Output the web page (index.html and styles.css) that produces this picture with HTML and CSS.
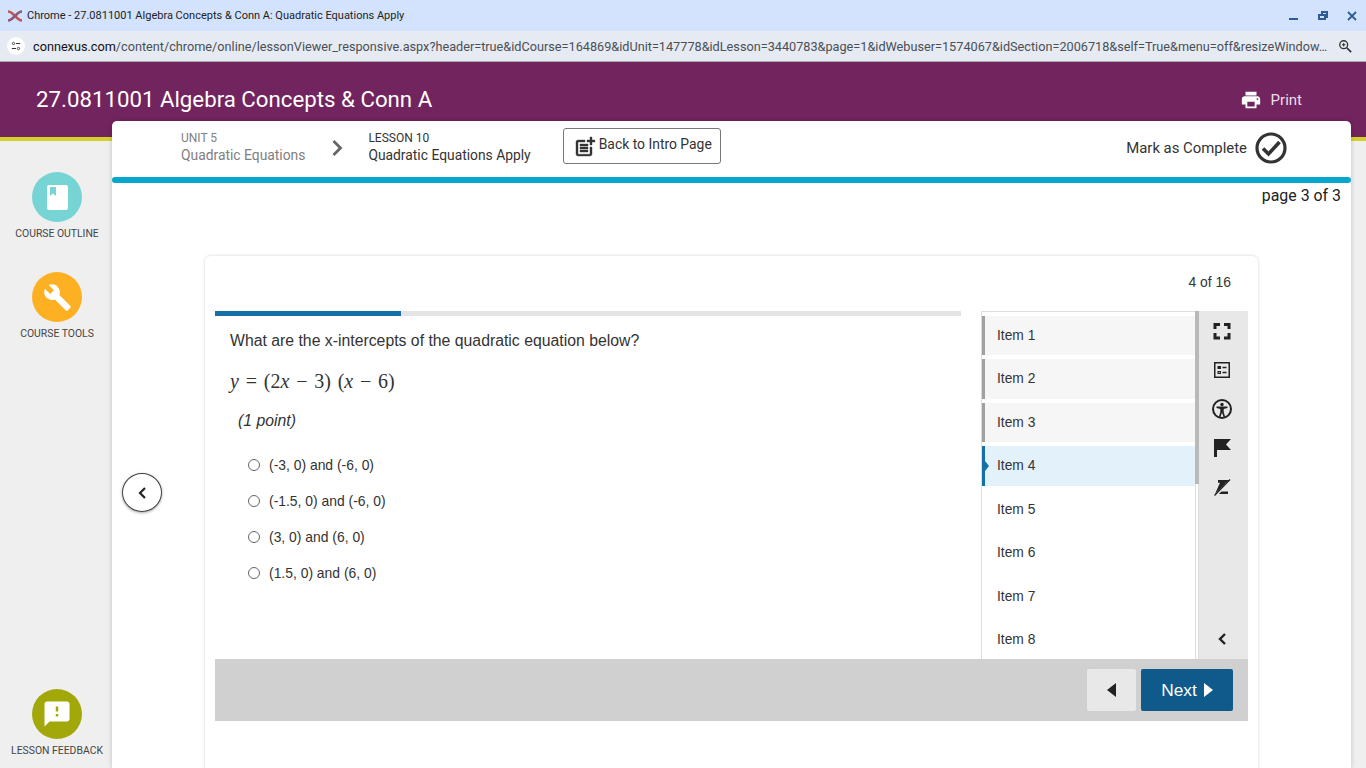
FILE: index.html

```html
<!DOCTYPE html>
<html lang="en">
<head>
    <meta charset="UTF-8">
    <title>Quadratic Equations Apply</title>
    <meta name="viewport" content="width=device-width, initial-scale=1.0">
    <link rel="stylesheet" href="styles.css">
</head>
<body>
    <div class="titlebar">
        <svg class="logo" viewBox="0 0 16 12"><path d="M1 1.500c3 0 5 2.500 7 4.500s4 4.500 7 4.500" fill="none" stroke="#c0555c" stroke-width="2.600"/><path d="M1 10.500c3 0 5-2.500 7-4.500s4-4.500 7-4.500" fill="none" stroke="#8d5a78" stroke-width="2.600"/></svg>
        <span class="title-text">Chrome - 27.0811001 Algebra Concepts &amp; Conn A: Quadratic Equations Apply</span>
        <div class="win-controls">
            <svg viewBox="0 0 12 12"><rect x="1" y="8" width="9" height="2" fill="#2f5c94"/></svg>
            <svg viewBox="0 0 12 12"><path d="M4 1h7v7H9v2H1V4h3zM3 6v2h4V6zM6 3v1h3v2h0V3z" fill="#2f5c94"/></svg>
            <svg viewBox="0 0 12 12"><path d="M2 2l8 8M10 2l-8 8" stroke="#2f5c94" stroke-width="1.800"/></svg>
        </div>
    </div>
    <div class="urlbar">
        <span class="site-icon">
            <svg viewBox="0 0 12 12"><circle cx="3" cy="3" r="1.400" fill="none" stroke="#333" stroke-width="1"/><path d="M6 3h5M1 9h5" stroke="#333" stroke-width="1.200"/><circle cx="9" cy="9" r="1.400" fill="none" stroke="#333" stroke-width="1"/></svg>
        </span>
        <span class="url-text"><b>connexus.com</b>/content/chrome/online/lessonViewer_responsive.aspx?header=true&amp;idCourse=164869&amp;idUnit=147778&amp;idLesson=3440783&amp;page=1&amp;idWebuser=1574067&amp;idSection=2006718&amp;self=True&amp;menu=off&amp;resizeWindow…</span>
        <svg class="zoom-icon" viewBox="0 0 16 16"><circle cx="6.500" cy="6.500" r="4.500" fill="none" stroke="#333" stroke-width="1.500"/><path d="M10 10l5 5" stroke="#333" stroke-width="2"/><path d="M4.500 6.500h4M6.500 4.500v4" stroke="#333" stroke-width="1.200"/></svg>
    </div>

    <header class="course-header">
        <h1>27.0811001 Algebra Concepts &amp; Conn A</h1>
        <div class="print">
            <svg viewBox="0 0 24 24"><path d="M19 8H5c-1.660 0-3 1.340-3 3v6h4v4h12v-4h4v-6c0-1.660-1.340-3-3-3zm-3 11H8v-5h8v5zm3-7c-.55 0-1-.45-1-1s.45-1 1-1 1 .45 1 1-.45 1-1 1zm-1-9H6v4h12V3z"/></svg>
            <span>Print</span>
        </div>
    </header>

    <div class="page-body">
        <aside class="sidebar">
            <div class="side-link outline-link">
                <span class="side-circle teal">
                    <svg viewBox="0 0 21 25"><path d="M2 0h17a2 2 0 0 1 2 2v21a2 2 0 0 1-2 2H2a2 2 0 0 1-2-2V2a2 2 0 0 1 2-2z" fill="#fff"/><path d="M3 2h6v9l-3-2.500L3 11z" fill="#76d4d4"/></svg>
                </span>
                <span class="side-label">COURSE OUTLINE</span>
            </div>
            <div class="side-link">
                <span class="side-circle amber">
                    <svg viewBox="0 0 24 24"><path fill="#fff" d="M22.700 19l-9.100-9.100c.9-2.300.4-5-1.500-6.900-2-2-5-2.400-7.400-1.300L9 6 6 9 1.600 4.700C.4 7.100.9 10.100 2.900 12.100c1.900 1.900 4.600 2.400 6.900 1.500l9.100 9.100c.4.4 1 .4 1.400 0l2.300-2.300c.5-.4.5-1.100.1-1.400z"/></svg>
                </span>
                <span class="side-label">COURSE TOOLS</span>
            </div>
            <div class="side-link feedback-link">
                <span class="side-circle olive">
                    <svg viewBox="0 0 24 24"><path fill="#fff" d="M20 2H4c-1.100 0-1.990.9-1.990 2L2 22l4-4h14c1.100 0 2-.9 2-2V4c0-1.100-.9-2-2-2zm-7 12h-2v-2h2v2zm0-4h-2V6h2v4z"/></svg>
                </span>
                <span class="side-label">LESSON FEEDBACK</span>
            </div>
        </aside>

        <main class="panel">
            <div class="lesson-bar">
                <div class="crumb crumb-unit">
                    <span class="crumb-top">UNIT 5</span>
                    <span class="crumb-name">Quadratic Equations</span>
                </div>
                <svg class="crumb-arrow" viewBox="0 0 12 18"><path d="M2.500 2l7 7-7 7" fill="none" stroke="#666" stroke-width="2.800"/></svg>
                <div class="crumb crumb-lesson">
                    <span class="crumb-top">LESSON 10</span>
                    <span class="crumb-name">Quadratic Equations Apply</span>
                </div>
                <div class="intro-btn">
                    <svg viewBox="0 0 24 24"><path d="M17 19.220H5V7h7V5H5c-1.100 0-2 .9-2 2v12c0 1.100.9 2 2 2h12c1.100 0 2-.9 2-2v-7h-2v7.220zM19 2h-2v3h-3c.01.01 0 2 0 2h3v2.990c.01.01 2 0 2 0V7h3V5h-3V2zM7 9h8v2H7zm0 3v2h8v-2h-3zm0 3h8v2H7z"/></svg>
                    <span>Back to Intro Page</span>
                </div>
                <div class="mark-complete">
                    <span>Mark as Complete</span>
                    <svg viewBox="0 0 32 32"><circle cx="16" cy="16" r="14" fill="none" stroke="#333" stroke-width="3.200"/><path d="M8 16.500l5.500 5.500L24.500 10" fill="none" stroke="#333" stroke-width="3.600"/></svg>
                </div>
            </div>
            <div class="teal-bar"></div>
            <div class="page-count">page 3 of 3</div>

            <button class="round-back">
                <svg viewBox="0 0 10 14"><path d="M8 2L3 7l5 5" fill="none" stroke="#222" stroke-width="2.200"/></svg>
            </button>

            <section class="card">
                <div class="item-count">4 of 16</div>
                <div class="quiz">
                    <div class="quiz-main">
                        <div class="question-col">
                            <div class="progress"><div class="progress-fill"></div></div>
                            <p class="question">What are the x-intercepts of the quadratic equation below?</p>
                            <p class="math"><i>y</i> = (2<i>x</i> &minus; 3) (<i>x</i> &minus; 6)</p>
                            <p class="points">(1 point)</p>
                            <ul class="answers">
                                <li><span class="radio"></span>(-3, 0) and (-6, 0)</li>
                                <li><span class="radio"></span>(-1.5, 0) and (-6, 0)</li>
                                <li><span class="radio"></span>(3, 0) and (6, 0)</li>
                                <li><span class="radio"></span>(1.5, 0) and (6, 0)</li>
                            </ul>
                        </div>
                        <div class="item-list">
                            <div class="item done">Item 1</div>
                            <div class="item done">Item 2</div>
                            <div class="item done">Item 3</div>
                            <div class="item current">Item 4</div>
                            <div class="item">Item 5</div>
                            <div class="item">Item 6</div>
                            <div class="item">Item 7</div>
                            <div class="item">Item 8</div>
                        </div>
                        <div class="list-scroll"><div class="list-thumb"></div></div>
                        <div class="tools">
                            <svg viewBox="0 0 24 24"><path d="M6.500 14h-3v6.500H10v-3H6.500zM3.500 10h3V7H10V4H3.500zM17.500 17.500H14v3h6.500V14h-3zM14 4v3h3.500v3h3V4z"/></svg>
                            <svg viewBox="0 0 24 24"><path fill-rule="evenodd" d="M4 4h16v16H4zM5.500 5.500v13h13v-13zM7.500 8h3.500v3H7.500zM12.500 8.800h4v1.500h-4zM7.500 13h3.500v3H7.500zM8.700 14.200v.8h1.200v-.8zM12.500 13.800h4v1.500h-4z"/></svg>
                            <svg viewBox="0 0 24 24"><circle cx="12" cy="12" r="9" fill="none" stroke="#222" stroke-width="2"/><circle cx="12" cy="7.500" r="1.700"/><path d="M6.500 9.500h11v1.600l-3.800.8v3l1.500 5h-1.700L12 15.500 10.500 20H8.800l1.500-5v-3l-3.800-.9z"/></svg>
                            <svg viewBox="0 0 24 24"><path d="M4 3h17l-5 5.500 5 5.500H7v7H4z"/></svg>
                            <svg viewBox="0 0 24 24"><path d="M8 5h12v2.800h-4.500l-4.500 8.700h7V19H5l5-11.200H8z"/><path d="M5 21L20 6" fill="none" stroke="#e8e8e8" stroke-width="2.600"/><path d="M4.500 20.500L20 4.500" fill="none" stroke="#222" stroke-width="1.300"/></svg>
                            <svg class="tools-collapse" viewBox="0 0 10 14"><path d="M8 2L3 7l5 5" fill="none" stroke="#222" stroke-width="2.400"/></svg>
                        </div>
                    </div>
                    <div class="quiz-footer">
                        <button class="prev-btn"><svg viewBox="0 0 9 14"><path d="M9 0v14L0 7z"/></svg></button>
                        <button class="next-btn">Next <svg viewBox="0 0 9 14"><path d="M0 0v14l9-7z"/></svg></button>
                    </div>
                </div>
            </section>
        </main>
    </div>
</body>
</html>
```

FILE: styles.css

```css
:root {
    --purple: #72245f;
    --blue: #0f5a8a;
    --text: #333333;
}
html, body {
    height: 768px;
    overflow: hidden;
}
body {
    margin: 0;
    font-family: Roboto, sans-serif;
    color: var(--text);
    background-color: #efefef;
}
svg {
    display: block;
}

/* browser window */
.titlebar {
    height: 31px;
    display: flex;
    align-items: center;
    padding-left: 7px;
    background-color: #d3e3fd;
    font-size: 11px;
    color: #222;
}
.logo {
    width: 16px;
    height: 12px;
    margin-right: 4px;
}
.win-controls {
    margin-left: auto;
    display: flex;
    gap: 17px;
    padding-right: 8px;
}
.win-controls svg {
    width: 12px;
    height: 12px;
}
.urlbar {
    height: 30px;
    display: flex;
    align-items: center;
    padding-left: 7px;
    background-color: #e5eaf3;
    border-bottom: 1px solid #a9a9a9;
}
.site-icon {
    width: 18px;
    height: 18px;
    border-radius: 50%;
    background-color: #fff;
    display: flex;
    align-items: center;
    justify-content: center;
    margin-right: 8px;
    flex-shrink: 0;
}
.site-icon svg {
    width: 10px;
    height: 10px;
}
.url-text {
    width: 1298px;
    font-size: 12.700px;
    color: #4a4f55;
    white-space: nowrap;
}
.url-text b {
    font-weight: 400;
    color: #111;
}
.zoom-icon {
    width: 14px;
    height: 14px;
    margin-left: 7px;
}

/* course header */
.course-header {
    height: 75px;
    display: flex;
    justify-content: space-between;
    padding: 0 64px 0 36px;
    background-color: var(--purple);
    border-bottom: 4px solid #d4d22a;
    color: #fff;
}
.course-header h1 {
    margin: 24px 0 0;
    font-size: 22.250px;
    font-weight: 400;
    line-height: 27px;
}
.print {
    display: flex;
    align-items: center;
    gap: 9px;
    height: 24px;
    margin-top: 26px;
    font-size: 15px;
    color: #ecdfe9;
}
.print svg {
    width: 22px;
    height: 22px;
    fill: #fff;
}

.page-body {
    display: flex;
    height: 627px;
}

/* left rail */
.sidebar {
    width: 112px;
    flex-shrink: 0;
    display: flex;
    flex-direction: column;
    align-items: center;
    padding: 31px 0 0 2px;
    box-sizing: border-box;
}
.side-link {
    display: flex;
    flex-direction: column;
    align-items: center;
    margin-bottom: 31px;
}
.feedback-link {
    margin-top: auto;
    margin-bottom: 10px;
}
.side-circle {
    width: 50px;
    height: 50px;
    border-radius: 50%;
    display: flex;
    align-items: center;
    justify-content: center;
}
.side-circle svg {
    width: 29px;
    height: 29px;
}
.outline-link svg {
    width: 21px;
    height: 25px;
}
.feedback-link svg {
    width: 30px;
    height: 30px;
}
.teal { background-color: #76d4d4; }
.amber { background-color: #fdb021; }
.olive { background-color: #a3a80a; }
.side-label {
    margin-top: 5px;
    font-size: 10.400px;
    line-height: 14px;
    color: #444;
    white-space: nowrap;
}

/* main white panel */
.panel {
    position: relative;
    width: 1239px;
    margin-top: -20px;
    height: 647px;
    background-color: #fff;
    border-radius: 5px 5px 0 0;
    box-shadow: 0 0 5px rgba(0,0,0,0.2);
}
.lesson-bar {
    height: 56px;
    display: flex;
    align-items: center;
    padding-left: 69px;
}
.crumb {
    display: flex;
    flex-direction: column;
    margin-top: -3px;
}
.crumb-top {
    font-size: 12px;
    line-height: 16px;
}
.crumb-name {
    font-size: 13.850px;
    line-height: 19px;
}
.crumb-unit {
    color: #808080;
}
.crumb-arrow {
    width: 12px;
    height: 18px;
    margin: -2px 25px 0 26px;
}
.intro-btn {
    display: flex;
    align-items: center;
    gap: 2px;
    height: 34px;
    margin: -6px 0 0 32px;
    padding: 0 8px 0 9px;
    border: 1px solid #777;
    border-radius: 3px;
    font-size: 13.900px;
}
.intro-btn svg {
    width: 24px;
    height: 24px;
    fill: #333;
    stroke: #333;
    stroke-width: 0.4;
    margin-top: 2px;
}
.intro-btn span {
    margin-bottom: 4px;
}
.mark-complete {
    margin: -2px 64px 0 auto;
    display: flex;
    align-items: center;
    gap: 8px;
    font-size: 14.900px;
}
.mark-complete svg {
    width: 32px;
    height: 32px;
}
.teal-bar {
    height: 6px;
    border-radius: 3px;
    background-color: #07a6cc;
}
.page-count {
    height: 22px;
    margin-top: 4px;
    padding-right: 10px;
    text-align: right;
    font-size: 15.900px;
    line-height: 18px;
    color: #222;
}
.round-back {
    position: absolute;
    left: 10px;
    top: 352px;
    width: 40px;
    height: 39px;
    padding: 0;
    display: flex;
    align-items: center;
    justify-content: center;
    background-color: #fff;
    border: 1px solid #444;
    border-radius: 50%;
    box-shadow: 0 1px 3px rgba(0,0,0,0.35);
}
.round-back svg {
    width: 10px;
    height: 14px;
}

/* question card */
.card {
    margin: 46px 92px 0;
    height: 520px;
    padding: 0 10px;
    background-color: #fff;
    border: 1px solid #eeeeee;
    border-radius: 7px;
    box-shadow: 0 0 3px rgba(0,0,0,0.08);
    font-family: "Liberation Sans", Arial, sans-serif;
}
.item-count {
    height: 55px;
    padding-right: 17px;
    text-align: right;
    font-size: 13.900px;
    line-height: 52px;
}
.quiz-main {
    display: flex;
    height: 348px;
}
.question-col {
    width: 746px;
    margin-right: 20px;
    flex-shrink: 0;
}
.progress {
    height: 5px;
    background-color: #e4e4e4;
}
.progress-fill {
    width: 186px;
    height: 100%;
    background-color: #1670a8;
}
.question {
    margin: 15px 0 0 15px;
    font-size: 15.800px;
    line-height: 20px;
}
.math {
    margin: 18px 0 0 15px;
    font-family: "Liberation Serif", serif;
    font-size: 20px;
    line-height: 24px;
    word-spacing: 1.800px;
}
.points {
    margin: 18px 0 0 23px;
    font-size: 15.800px;
    font-style: italic;
    line-height: 20px;
}
.answers {
    list-style: none;
    margin: 16px 0 0 33px;
    padding: 0;
    font-size: 13.900px;
}
.answers li {
    display: flex;
    align-items: center;
    height: 36px;
}
.radio {
    width: 10px;
    height: 10px;
    margin-right: 9px;
    border: 1px solid #666;
    border-radius: 50%;
}

/* item list + tool strip */
.item-list {
    width: 214px;
    padding-top: 3.500px;
    border: 1px solid #dddddd;
    border-right: none;
    border-bottom: none;
    overflow: hidden;
    flex-shrink: 0;
    box-sizing: border-box;
    height: 348px;
}
.item {
    position: relative;
    height: 39.500px;
    margin-bottom: 4px;
    padding-left: 12px;
    border-left: 3px solid transparent;
    display: flex;
    align-items: center;
    width: 198px;
    font-size: 13.800px;
}
.done {
    background-color: #f6f6f6;
    border-left-color: #a0a0a0;
}
.current {
    background-color: #e3f1fb;
    border-left-color: #1670a8;
}
.current::before {
    content: "";
    position: absolute;
    left: 0;
    top: 15px;
    border: 5px solid transparent;
    border-left: 4px solid #1670a8;
}
.list-scroll {
    width: 4px;
    box-sizing: border-box;
    flex-shrink: 0;
    background-color: #fff;
    border-left: 1px solid #ddd;
    border-right: 1px solid #ddd;
}
.list-thumb {
    height: 173px;
    margin: 0 -1px;
    background-color: #b9b9b9;
}
.tools {
    flex: 1;
    display: flex;
    flex-direction: column;
    align-items: center;
    padding: 8px 3px 0 0;
    gap: 15px;
    background-color: #e8e8e8;
}
.tools svg {
    width: 24px;
    height: 24px;
    fill: #222;
}
.tools .tools-collapse {
    width: 10px;
    height: 14px;
    margin-top: auto;
    margin-bottom: 13px;
}
.quiz-footer {
    height: 62px;
    display: flex;
    align-items: center;
    justify-content: flex-end;
    gap: 5px;
    padding-right: 15px;
    background-color: #d0d0d0;
}
.quiz-footer button {
    height: 42px;
    border: none;
    border-radius: 2px;
    display: flex;
    align-items: center;
    justify-content: center;
    font-family: inherit;
}
.prev-btn {
    width: 49px;
    background-color: #e8e8e8;
}
.prev-btn svg {
    width: 9px;
    height: 14px;
    fill: #222;
}
.next-btn {
    width: 92px;
    gap: 7px;
    background-color: var(--blue);
    color: #fff;
    font-size: 17.300px;
}
.next-btn svg {
    width: 9px;
    height: 14px;
    fill: #fff;
}
```
